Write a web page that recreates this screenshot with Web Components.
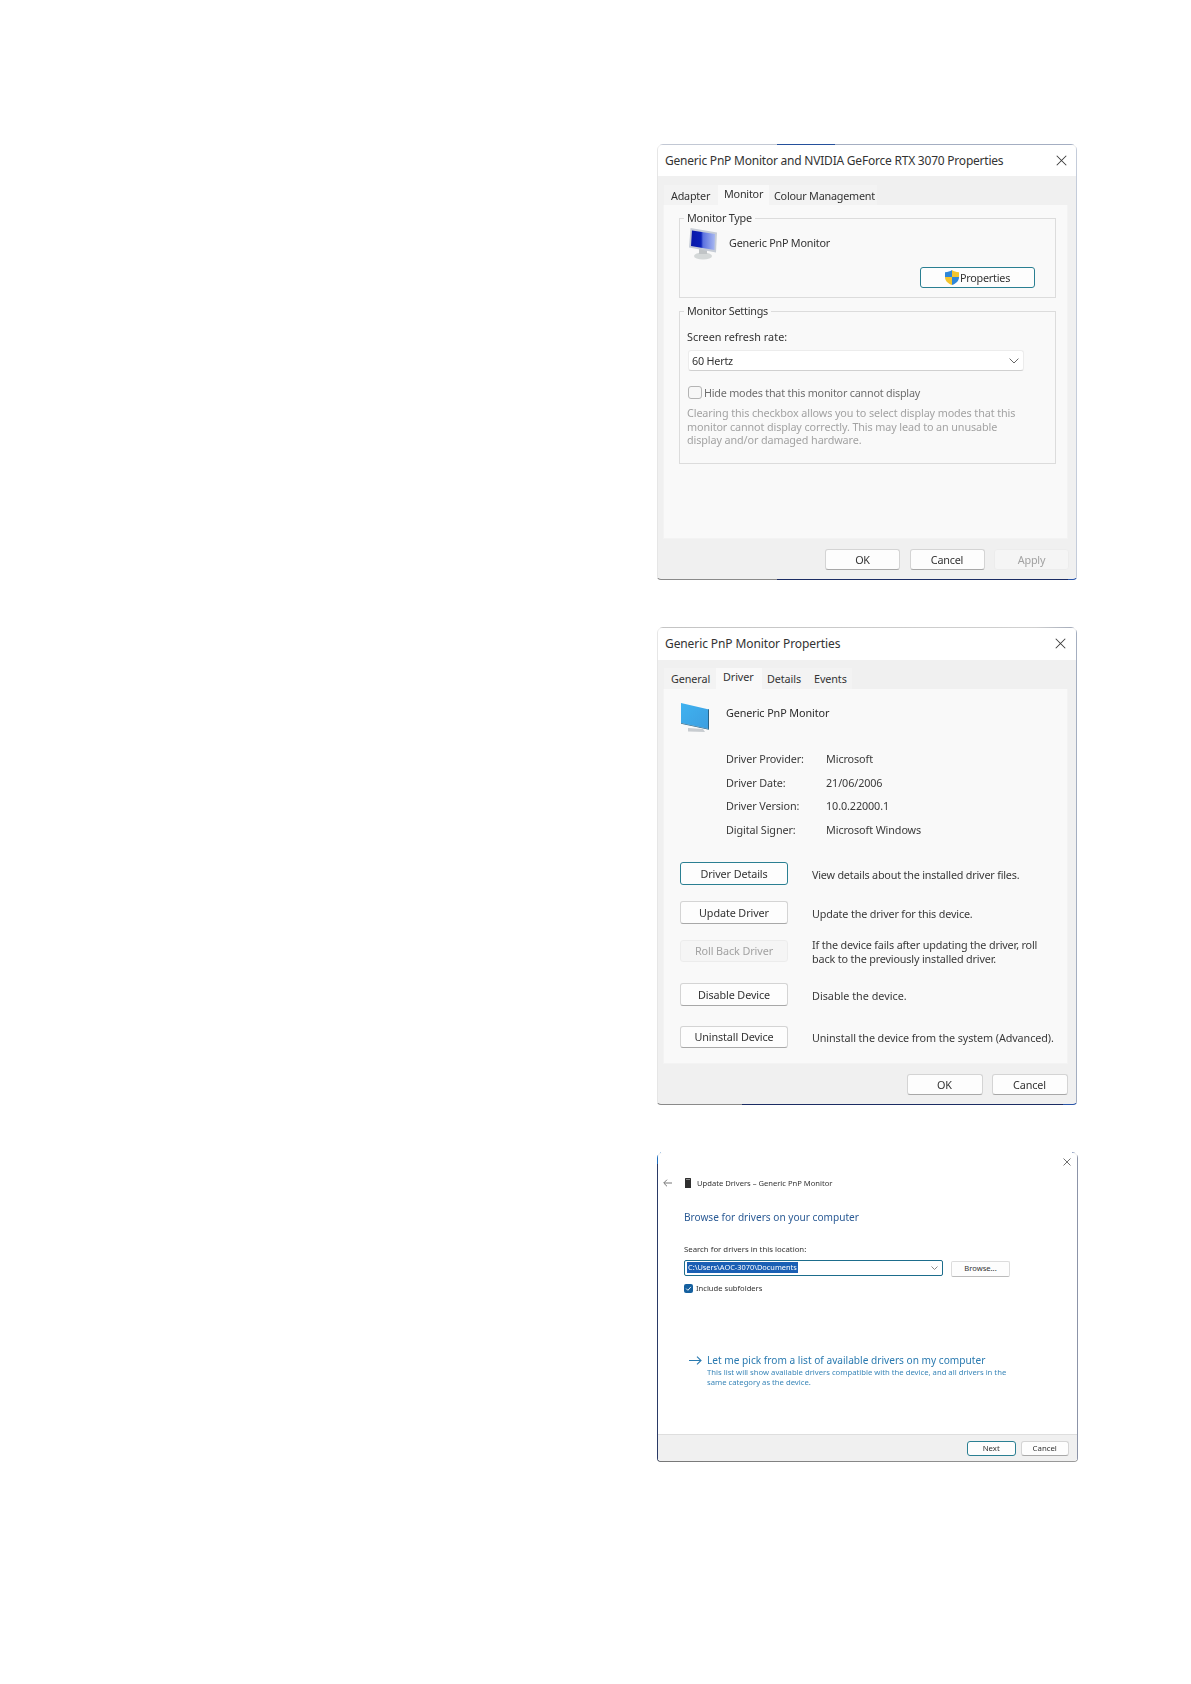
<!DOCTYPE html>
<html lang="en"><head><meta charset="utf-8"><title>Monitor driver steps</title>
<style>
html,body{margin:0;padding:0;background:#fff}
body{font-family:"Noto Sans","Open Sans",sans-serif;color:#2b2b2b}
</style></head><body>
<shot-page>
  <win-frame style="height:436px;letter-spacing:-.22px;--top:linear-gradient(90deg,#c2c8d4 0 120px,#24509c 120px 178px,#a4aec2 178px);--bottom:linear-gradient(90deg,#8a8a8a 0 120px,#1b2c63 120px 411px,#2a55a8 411px);--left:linear-gradient(#e6e6e6,#e6e6e6);--right:linear-gradient(#c4ccda,#c4ccda)">
    <prop-dialog heading="Generic PnP Monitor and NVIDIA GeForce RTX 3070 Properties" bar="31" top="9" tabh="20" panel="334">
      <win-tab slot="tabs" style="width:54px;padding-left:7px">Adapter</win-tab>
      <win-tab slot="tabs" selected style="width:51px;padding-left:6px">Monitor</win-tab>
      <win-tab slot="tabs" style="width:108px;padding-left:5px">Colour Management</win-tab>

      <group-box legend="Monitor Type" style="height:80px;margin:13px 11px 0 15px">
        <div style="display:flex;align-items:center;gap:10px;margin:9px 0 0 9px;height:32px">
          <crt-icon></crt-icon><span style="font-size:10.8px;margin-top:-3px">Generic PnP Monitor</span>
        </div>
        <div style="display:flex;justify-content:flex-end;margin:7px 20px 0 0">
          <win-btn focus style="width:115px;height:21px"><shield-icon></shield-icon>Properties</win-btn>
        </div>
      </group-box>

      <group-box legend="Monitor Settings" style="height:153px;margin:13px 11px 0 15px">
        <div style="margin:18px 0 0 7px;font-size:10.8px;line-height:14px;letter-spacing:.05px">Screen refresh rate:</div>
        <refresh-select style="margin:6px 0 0 8px">60 Hertz</refresh-select>
        <div style="display:flex;align-items:center;gap:2px;margin:15px 0 0 8px;height:13px;font-size:10.8px;color:#6e6e6e">
          <check-box></check-box><span>Hide modes that this monitor cannot display</span>
        </div>
        <div style="margin:7px 0 0 7px;white-space:nowrap;font-size:10.8px;line-height:13.5px;letter-spacing:-.11px;color:#a3a3a3">Clearing this checkbox allows you to select display modes that this<br>monitor cannot display correctly. This may lead to an unusable<br>display and/or damaged hardware.</div>
      </group-box>

      <dialog-foot slot="foot" style="--w:75px;--g:9.5px">
        <win-btn>OK</win-btn><win-btn>Cancel</win-btn><win-btn disabled>Apply</win-btn>
      </dialog-foot>
    </prop-dialog>
  </win-frame>

  <win-frame style="height:478px;letter-spacing:-.1px;--top:linear-gradient(90deg,#c4c4c4,#d0d0d0 90%,#a0a8b8);--bottom:linear-gradient(90deg,#8a8a8a 0 85px,#1b2c63 85px 406px,#2a55a8 406px);--left:linear-gradient(#e6e6e6,#e6e6e6);--right:linear-gradient(#a4aec0,#a4aec0)">
    <prop-dialog heading="Generic PnP Monitor Properties" bar="32" barpad="2" closepad="10" top="8" tabh="21" panel="375">
      <win-tab slot="tabs" style="width:52px;padding-left:7px">General</win-tab>
      <win-tab slot="tabs" selected style="width:46px;padding-left:7px">Driver</win-tab>
      <win-tab slot="tabs" style="width:44px;padding-left:5px">Details</win-tab>
      <win-tab slot="tabs" style="width:46px;padding-left:8px">Events</win-tab>

      <div style="display:flex;gap:17px;margin:14px 0 0 17px;height:30px">
        <flat-monitor></flat-monitor><span style="font-size:10.8px;line-height:14px;margin-top:3px">Generic PnP Monitor</span>
      </div>
      <driver-info style="margin:14px 0 0 62px">
        <span>Driver Provider:</span><span>Microsoft</span>
        <span>Driver Date:</span><span>21/06/2006</span>
        <span>Driver Version:</span><span>10.0.22000.1</span>
        <span>Digital Signer:</span><span>Microsoft Windows</span>
      </driver-info>
      <driver-action style="margin-top:21px;letter-spacing:-.2px" focus label="Driver Details">View details about the installed driver files.</driver-action>
      <driver-action style="margin-top:16.5px;letter-spacing:-.16px" label="Update Driver">Update the driver for this device.</driver-action>
      <driver-action style="margin-top:16px;letter-spacing:-.16px" disabled label="Roll Back Driver">If the device fails after updating the driver, roll<br>back to the previously installed driver.</driver-action>
      <driver-action style="margin-top:21px;letter-spacing:0" label="Disable Device">Disable the device.</driver-action>
      <driver-action style="margin-top:20px" label="Uninstall Device">Uninstall the device from the system (Advanced).</driver-action>

      <dialog-foot slot="foot" style="--w:76px;--g:9px;--r:8.5px">
        <win-btn>OK</win-btn><win-btn>Cancel</win-btn>
      </dialog-foot>
    </prop-dialog>
  </win-frame>

  <win-frame style="height:310px;width:421px;--left:linear-gradient(180deg,#1f6fc0 0 12px,#2a3a66 12px);--top:linear-gradient(90deg,#1f6fc0 0 4px,#fff 4px 415px,#8fa0c0 415px);--bottom:linear-gradient(90deg,#222c4a,#777 4px,#9a9a9a);--right:linear-gradient(#8c94a8,#8c94a8)">
    <wizard-dialog></wizard-dialog>
  </win-frame>
</shot-page>

<script>
function def(name, css, html){
  customElements.define(name, class extends HTMLElement{
    constructor(){super();this.attachShadow({mode:'open'});}
    connectedCallback(){
      if(this.shadowRoot.childElementCount) return;
      const h = typeof html==='function'?html(this):html;
      const c = typeof css==='function'?css(this):css;
      this.shadowRoot.innerHTML = `<style>${c}</style>${h}`;
    }
  });
}
const X = s=>`<svg width="${s}" height="${s}" viewBox="0 0 12 12" style="display:block"><path d="M.8.8l10.4 10.4M11.2.8.8 11.2" stroke="#3a3a3a" stroke-width="1.1" fill="none"/></svg>`;

def('shot-page',`:host{display:flex;flex-direction:column;gap:47px;box-sizing:border-box;height:1684px;padding:144px 0 0 657px}`,`<slot></slot>`);

def('win-frame',`:host{display:block;box-sizing:border-box;width:420px;padding:1px;filter:blur(.35px);border-radius:6px 6px 4px 4px;overflow:hidden;
  background:var(--top,linear-gradient(#aaa,#aaa)) top/100% 1px no-repeat,var(--bottom,linear-gradient(#888,#888)) bottom/100% 2px no-repeat,var(--left,linear-gradient(#c4c4c4,#c4c4c4)) left/1px 100% no-repeat,var(--right,linear-gradient(#bbb,#bbb)) right/1px 100% no-repeat,#f0f0f0}
  .i{height:100%;border-radius:5px 5px 3px 3px;overflow:hidden}`,`<div class="i"><slot></slot></div>`);

def('prop-dialog',h=>`:host{display:flex;flex-direction:column;height:100%;background:#f0f0f0}
  .bar{box-sizing:border-box;height:${h.getAttribute('bar')}px;padding:0 ${h.getAttribute('closepad')||9}px ${h.getAttribute('barpad')||0}px 7px;background:#fff;display:flex;align-items:center;justify-content:space-between;font-size:12px;color:#333}
  .tabs{display:flex;padding:${h.getAttribute('top')}px 0 0 6px;height:${h.getAttribute('tabh')}px}
  .panel{height:${h.getAttribute('panel')}px;box-sizing:border-box;margin:0 8px 0 5px;background:#f9f9f9;border:1px solid #f3f3f3;border-width:0 1px 1px;overflow:hidden;display:flow-root}
  `,h=>`<div class="bar"><span>${h.getAttribute('heading')}</span>${X(11)}</div>
  <div class="tabs"><slot name="tabs"></slot></div><div class="panel"><slot></slot></div><slot name="foot"></slot>`);

def('win-tab',h=>`:host{display:block;box-sizing:border-box;height:100%;font-size:10.8px;background:${h.hasAttribute('selected')?'#f9f9f9':'#f3f3f3'};line-height:${h.hasAttribute('selected')?'18px':'22px'};color:#333;white-space:nowrap}`,`<slot></slot>`);

def('group-box',h=>`:host{display:block;box-sizing:border-box;position:relative;border:1px solid #dcdcdc;color:#333}
  .lg{position:absolute;left:4px;top:-8px;padding:0 3px;background:#f9f9f9;font-size:10.8px;line-height:14px}`,h=>`<div class="lg">${h.getAttribute('legend')}</div><slot></slot>`);

def('win-btn',h=>{
  const f=h.hasAttribute('focus'),d=h.hasAttribute('disabled');
  return `:host{display:inline-flex;align-items:center;justify-content:center;box-sizing:border-box;height:21px;font-size:10.8px;border-radius:3px;white-space:nowrap;
   background:${d?'#f5f5f5':'#fdfdfd'};color:${d?'#a2a2a2':'#333'};
   border:${f?'1.5px solid #2a7f92':'1px solid '+(d?'#ececec':'#d4d4d4')};${f||d?'':'border-bottom-color:#a8a8a8;'}}`},`<slot></slot>`);

def('dialog-foot',`:host{display:flex;justify-content:flex-end;gap:var(--g);height:40px;box-sizing:border-box;padding:10px var(--r,7px) 0 0}
  ::slotted(win-btn){width:var(--w)}`,`<slot></slot>`);

def('crt-icon',`:host{display:block;width:30px;height:32px;flex:none}svg{display:block}`,`<svg width="30" height="32" viewBox="0 0 30 32">
  <defs><linearGradient id="s" x1="0" x2="1" y1="0" y2="0"><stop offset="0" stop-color="#0818a8"/><stop offset=".42" stop-color="#0a20b8"/><stop offset=".5" stop-color="#5a70e0"/><stop offset="1" stop-color="#a8b8f0"/></linearGradient></defs>
  <ellipse cx="14" cy="28" rx="9" ry="3.6" fill="#d4d8d8"/><rect x="10" y="21" width="8" height="5" fill="#c0c4c6"/>
  <path d="M1.500 0 28 4.500 27 24.500 0 19.500Z" fill="#c6ccd6"/><path d="M3 2.500 26 6 25.500 22 2 18Z" fill="url(#s)"/></svg>`);

def('flat-monitor',`:host{display:block;width:28px;height:30px;flex:none}svg{display:block}`,`<svg width="28" height="30" viewBox="0 0 28 30">
  <defs><linearGradient id="f" x1="0" x2="1" y1="0" y2="1"><stop offset="0" stop-color="#3fb2f0"/><stop offset="1" stop-color="#3c9ee0"/></linearGradient></defs>
  <path d="M7 25 22 26 24 29 7 28.500Z" fill="#c8ccd0"/><path d="M0 0 28 6.500V26L0 20Z" fill="url(#f)"/><path d="M27 6.300 28 6.500V26L27 25.800Z" fill="#2a6488"/><path d="M0 20 28 26V26.800L0 20.800Z" fill="#2a6a90"/></svg>`);

def('shield-icon',`:host{display:block;flex:none;margin-right:1px}svg{display:block}`,`<svg width="14" height="15" viewBox="0 0 14 15"><path d="M7 0C5 1.400 3 2 0 2.200V7h7Z" fill="#2f86d8"/><path d="M7 0C9 1.400 11 2 14 2.200V7H7Z" fill="#f3c52e"/><path d="M0 7c0 4 3 6.500 7 8V7Z" fill="#f3c52e"/><path d="M14 7c0 4-3 6.500-7 8V7Z" fill="#2f86d8"/></svg>`);

def('check-box',`:host{display:block;flex:none;box-sizing:border-box;width:14px;height:13px;border:1px solid #b4b4b4;border-radius:3px;background:#f7f7f7}`,``);

def('refresh-select',`:host{display:flex;align-items:center;justify-content:space-between;box-sizing:border-box;width:336px;height:21px;padding:0 4px 0 3px;background:#fff;border:1px solid #ececec;border-bottom-color:#d0d0d0;border-radius:3px;font-size:10.8px;color:#333}`,
 `<slot></slot><svg width="10" height="6" viewBox="0 0 10 6" style="margin-right:0"><path d="M.6.6 5 5 9.400.6" stroke="#666" fill="none"/></svg>`);

def('driver-info',`:host{display:grid;grid-template-columns:100px auto;grid-auto-rows:23.500px;justify-content:start;font-size:10.8px;line-height:23.500px;color:#3a3a3a}
  ::slotted(span){white-space:nowrap}`,`<slot></slot>`);

def('driver-action',h=>`:host{display:flex;align-items:center;gap:24px;margin-left:16px;height:22.500px;font-size:10.8px;color:#3a3a3a}
  win-btn{width:108px;height:22.500px;flex:none;letter-spacing:-.1px}
  .t{line-height:13.500px;white-space:nowrap;margin-top:2px}`,h=>`<win-btn ${h.hasAttribute('focus')?'focus':''} ${h.hasAttribute('disabled')?'disabled':''}>${h.getAttribute('label')}</win-btn><div class="t"><slot></slot></div>`);

def('wizard-dialog',`:host{display:flex;flex-direction:column;height:100%;background:#fff;color:#333}
  .main{flex:1}
  .close{display:flex;justify-content:flex-end;padding:5px 6px 0 0}
  .head{display:flex;align-items:center;height:12px;margin:11px 0 0 5px;font-size:7.600px}
  .head svg.b{margin-right:13px}.head svg.d{margin-right:6px}
  .h1{margin:21px 0 0 26px;font-size:10.100px;line-height:14px;color:#2a5a94}
  .lab{margin:20px 0 0 26px;font-size:7.800px;line-height:10px}
  .combo{display:flex;gap:8px;margin:5.500px 0 0 26px}
  .box{box-sizing:border-box;width:259px;height:16px;border:1px solid #1d6d8c;border-radius:2px;display:flex;align-items:center;justify-content:space-between;padding:0 4px 0 2px}
  .sel{background:#1a5fb4;color:#fff;font-size:7.400px;line-height:11px;padding:0 1px;margin-top:-1px}
  .brw{box-sizing:border-box;width:59px;height:16px;margin-top:1px;padding-bottom:2px;border:1px solid #dcdcdc;border-bottom-color:#bbb;border-radius:2px;background:#fdfdfd;font-size:7.600px;display:flex;align-items:center;justify-content:center}
  .chk{display:flex;align-items:center;gap:3px;margin:6.500px 0 0 26px;height:10px;font-size:7.600px}
  .cb{width:9px;height:9px;border-radius:2px;background:#15609f;display:block}
  .link{display:flex;align-items:center;gap:5px;margin:60px 0 0 31px;height:14px;font-size:10.150px;color:#2a7ab0}
  .desc{margin:-.5px 0 0 49px;font-size:7.700px;line-height:10.800px;color:#3a86b8;white-space:nowrap}
  .foot{height:27px;box-sizing:border-box;background:#f0f0f0;border-top:1px solid #dedede;display:flex;justify-content:flex-end;gap:5px;padding:5.500px 8px 0 0}
  win-btn{width:48.500px;height:15px;font-size:7.800px}`,
`<div class="main">
  <div class="close">${X(8)}</div>
  <div class="head">
    <svg class="b" width="9" height="8" viewBox="0 0 9 8"><path d="M9 4H1M4 .7.700 4 4 7.300" stroke="#777" fill="none"/></svg>
    <svg class="d" width="6" height="10" viewBox="0 0 6 10"><rect width="6" height="10" rx=".5" fill="#2e2e2e"/><rect x="1" y="1" width="4" height="1" fill="#888"/></svg>
    <span>Update Drivers – Generic PnP Monitor</span>
  </div>
  <div class="h1">Browse for drivers on your computer</div>
  <div class="lab">Search for drivers in this location:</div>
  <div class="combo">
    <div class="box"><span class="sel">C:\\Users\\AOC-3070\\Documents</span><svg width="7" height="4" viewBox="0 0 7 4"><path d="M.5.500 3.500 3.500 6.500.500" stroke="#888" fill="none"/></svg></div>
    <div class="brw">Browse...</div>
  </div>
  <div class="chk"><svg class="cb" viewBox="0 0 9 9"><path d="M2.200 4.600 3.900 6.300 6.900 2.900" stroke="#fff" stroke-width=".9" fill="none"/></svg><span>Include subfolders</span></div>
  <div class="link"><svg width="13" height="9" viewBox="0 0 13 9"><path d="M0 4.500H12M8 .7 12 4.500 8 8.300" stroke="#2a7ab0" stroke-width="1.100" fill="none"/></svg><span>Let me pick from a list of available drivers on my computer</span></div>
  <div class="desc">This list will show available drivers compatible with the device, and all drivers in the<br>same category as the device.</div>
</div>
<div class="foot"><win-btn focus>Next</win-btn><win-btn>Cancel</win-btn></div>`);
</script>
</body></html>
